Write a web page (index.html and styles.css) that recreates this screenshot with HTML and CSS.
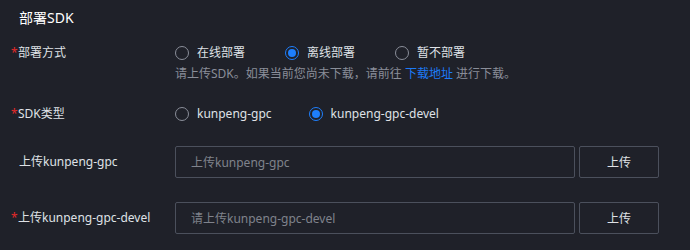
FILE: index.html
```html
<!DOCTYPE html>
<html lang="zh-CN">
<head>
  <meta charset="UTF-8">
  <title>部署SDK</title>
  <link rel="stylesheet" href="styles.css">
</head>
<body>
  <div class="panel">
    <h2 class="title">部署SDK</h2>

    <div class="row row-mode">
      <div class="label required">部署方式</div>
      <div class="field">
        <div class="radios">
          <label class="radio"><span class="dot"></span>在线部署</label>
          <label class="radio checked"><span class="dot"></span>离线部署</label>
          <label class="radio"><span class="dot"></span>暂不部署</label>
        </div>
        <div class="hint">请上传SDK。如果当前您尚未下载，请前往 <a href="#">下载地址</a> 进行下载。</div>
      </div>
    </div>

    <div class="row row-type">
      <div class="label required">SDK类型</div>
      <div class="field">
        <div class="radios">
          <label class="radio"><span class="dot"></span>kunpeng-gpc</label>
          <label class="radio checked"><span class="dot"></span>kunpeng-gpc-devel</label>
        </div>
      </div>
    </div>

    <div class="row row-upload">
      <div class="label">上传kunpeng-gpc</div>
      <div class="field upload">
        <input type="text" placeholder="上传kunpeng-gpc">
        <button type="button">上传</button>
      </div>
    </div>

    <div class="row row-upload2">
      <div class="label required">上传kunpeng-gpc-devel</div>
      <div class="field upload">
        <input type="text" placeholder="请上传kunpeng-gpc-devel">
        <button type="button">上传</button>
      </div>
    </div>
  </div>
</body>
</html>
```

FILE: styles.css
```css
body {
  margin: 0;
  background: #1f2129;
  font-family: "Noto Sans", "Noto Sans CJK SC", sans-serif;
  font-size: 12px;
  color: #dfe1e6;
}
.panel {
  padding-top: 8px;
}
.title {
  margin: 0;
  padding-left: 19px;
  font-size: 14px;
  font-weight: normal;
  line-height: 20px;
  color: #ffffff;
}
.row {
  display: flex;
  align-items: flex-start;
}
.row-mode {
  margin-top: 15px;
}
.row-type {
  margin-top: 21px;
}
.row-upload {
  margin-top: 22px;
  align-items: center;
}
.row-upload2 {
  margin-top: 24px;
  align-items: center;
}
.label {
  width: 157px;
  padding-left: 18px;
  line-height: 20px;
  flex-shrink: 0;
}
.row-upload .label {
  padding-left: 19px;
  width: 156px;
}
.required::before {
  content: "*";
  color: #e32a2a;
  display: inline-block;
  width: 7px;
  margin-left: -7px;
}
.radios {
  display: flex;
  line-height: 20px;
}
.radio {
  display: flex;
  align-items: center;
  margin-right: 40px;
}
.row-type .radio {
  margin-right: 37px;
}
.dot {
  box-sizing: border-box;
  width: 14px;
  height: 14px;
  border: 1px solid #8a8e99;
  border-radius: 50%;
  margin-right: 8px;
  display: flex;
  align-items: center;
  justify-content: center;
}
.checked .dot {
  border-color: #1e7ffd;
}
.checked .dot::after {
  content: "";
  width: 8px;
  height: 8px;
  border-radius: 50%;
  background: #1e7ffd;
}
.hint {
  margin-top: 2px;
  line-height: 18px;
  color: #8a8e99;
}
.hint a {
  color: #1d7bf7;
  text-decoration: none;
}
.upload {
  display: flex;
  gap: 4px;
}
input {
  box-sizing: border-box;
  width: 400px;
  height: 32px;
  padding: 0 15px;
  background: transparent;
  border: 1px solid #4b505c;
  border-radius: 2px;
  font: inherit;
  color: #dfe1e6;
}
input::placeholder {
  color: #7f838c;
}
button {
  box-sizing: border-box;
  width: 80px;
  height: 32px;
  background: transparent;
  border: 1px solid #4b505c;
  border-radius: 2px;
  font: inherit;
  color: #dfe1e6;
}
```
